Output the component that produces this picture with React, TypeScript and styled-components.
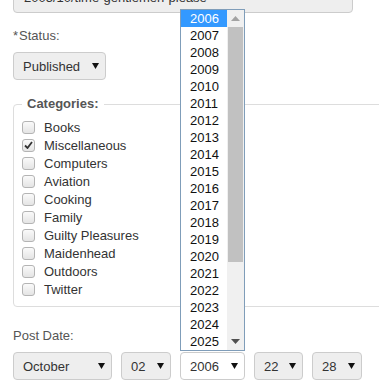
import React from "react";
import styled, { createGlobalStyle } from "styled-components";

const Global = createGlobalStyle`
  html, body { margin: 0; padding: 0; background: #fff; }
  body { font-family: "Liberation Sans", Arial, sans-serif; font-size: 13px; color: #333; overflow: hidden; }
`;

const Page = styled.div`
  position: relative;
  width: 379px;
  height: 391px;
  overflow: hidden;
  padding-left: 13px;
  box-sizing: border-box;
`;

const SlugInput = styled.div`
  margin-top: -18px;
  width: 340px;
  height: 31px;
  box-sizing: border-box;
  background: #eeeeee;
  border: 1px solid #cccccc;
  border-radius: 4px;
  padding: 0 10px;
  display: flex;
  align-items: center;
  font-size: 13px;
  color: #333;
`;

const Label = styled.div<{ $mt: number }>`
  margin-top: ${(p) => p.$mt}px;
  font-size: 13px;
  line-height: 16px;
  color: #555;
  span { margin-right: 1px; }
`;

const SelectBox = styled.div<{ $w: number; $white?: boolean }>`
  width: ${(p) => p.$w}px;
  height: 28px;
  box-sizing: border-box;
  background: ${(p) => (p.$white ? "#fff" : "#eeeeee")};
  border: 1px solid #cccccc;
  border-radius: 4px;
  display: flex;
  align-items: center;
  justify-content: space-between;
  padding: 0 6px 0 9px;
  font-size: 13px;
  color: #333;
`;

const Arrow = () => (
  <svg width="7" height="6" viewBox="0 0 7 6">
    <polygon points="0,0 7,0 3.5,6" fill="#111" />
  </svg>
);

const Select: React.FC<{ w: number; value: string; white?: boolean }> = ({ w, value, white }) => (
  <SelectBox $w={w} $white={white}>
    <span>{value}</span>
    <Arrow />
  </SelectBox>
);

const StatusWrap = styled.div`
  margin-top: 8px;
`;

const Fieldset = styled.fieldset`
  margin: 16px 0 0 0;
  width: 400px;
  height: 211px;
  box-sizing: border-box;
  border: 1px solid #dddddd;
  border-radius: 4px;
  padding: 6px 0 0 8px;
  min-width: 0;
`;

const Legend = styled.legend`
  padding: 0 5px;
  margin-left: 0;
  font-weight: bold;
  font-size: 13px;
  line-height: 16px;
  color: #555;
`;

const Row = styled.div`
  display: flex;
  align-items: center;
  height: 18px;
  gap: 9px;
  color: #333;
`;

const Box = styled.div`
  width: 13px;
  height: 13px;
  box-sizing: border-box;
  border: 1px solid #b4b4b4;
  border-radius: 3px;
  background: linear-gradient(#fafafa, #e4e4e4);
  display: flex;
  align-items: center;
  justify-content: center;
`;

const DateRow = styled.div`
  margin-top: 8px;
  display: flex;
  gap: 9px;
`;

const List = styled.div`
  position: absolute;
  left: 180px;
  top: 9px;
  width: 65px;
  height: 342px;
  box-sizing: border-box;
  border: 1px solid #7f9db9;
  background: #fff;
  display: flex;
`;

const Items = styled.div`
  flex: 1;
  display: flex;
  flex-direction: column;
`;

const Item = styled.div<{ $sel?: boolean }>`
  height: 17px;
  line-height: 17px;
  padding-left: 9px;
  font-size: 13px;
  color: ${(p) => (p.$sel ? "#fff" : "#111")};
  background: ${(p) => (p.$sel ? "#3399ff" : "transparent")};
`;

const Scrollbar = styled.div`
  width: 17px;
  background: #f0f0f0;
  display: flex;
  flex-direction: column;
  align-items: center;
`;

const ScrollBtn = styled.div`
  height: 17px;
  width: 17px;
  display: flex;
  align-items: center;
  justify-content: center;
`;

const Thumb = styled.div`
  width: 15px;
  height: 235px;
  background: #c1c1c1;
`;

const Spacer = styled.div`
  flex: 1;
`;

const categories = [
  "Books",
  "Miscellaneous",
  "Computers",
  "Aviation",
  "Cooking",
  "Family",
  "Guilty Pleasures",
  "Maidenhead",
  "Outdoors",
  "Twitter",
];

const years = Array.from({ length: 20 }, (_, i) => String(2006 + i));

export default function App() {
  return (
    <>
      <Global />
      <Page>
        <SlugInput>2005/10/time-gentlemen-please</SlugInput>
        <Label $mt={15}>
          <span>*</span>Status:
        </Label>
        <StatusWrap>
          <Select w={93} value="Published" />
        </StatusWrap>
        <Fieldset>
          <Legend>Categories:</Legend>
          {categories.map((c) => (
            <Row key={c}>
              <Box>
                {c === "Miscellaneous" && (
                  <svg width="9" height="8" viewBox="0 0 9 8">
                    <path d="M1 4.5 L3.5 7 L8 1" stroke="#333" strokeWidth="1.8" fill="none" />
                  </svg>
                )}
              </Box>
              <span>{c}</span>
            </Row>
          ))}
        </Fieldset>
        <Label $mt={21}>Post Date:</Label>
        <DateRow>
          <Select w={99} value="October" />
          <Select w={50} value="02" />
          <Select w={65} value="2006" white />
          <Select w={49} value="22" />
          <Select w={50} value="28" />
        </DateRow>
        <List>
          <Items>
            {years.map((y, i) => (
              <Item key={y} $sel={i === 0}>
                {y}
              </Item>
            ))}
          </Items>
          <Scrollbar>
            <ScrollBtn>
              <svg width="9" height="5" viewBox="0 0 9 5">
                <polygon points="0,5 9,5 4.5,0" fill="#a3a3a3" />
              </svg>
            </ScrollBtn>
            <Thumb />
            <Spacer />
            <ScrollBtn>
              <svg width="9" height="5" viewBox="0 0 9 5">
                <polygon points="0,0 9,0 4.5,5" fill="#505050" />
              </svg>
            </ScrollBtn>
          </Scrollbar>
        </List>
      </Page>
    </>
  );
}
